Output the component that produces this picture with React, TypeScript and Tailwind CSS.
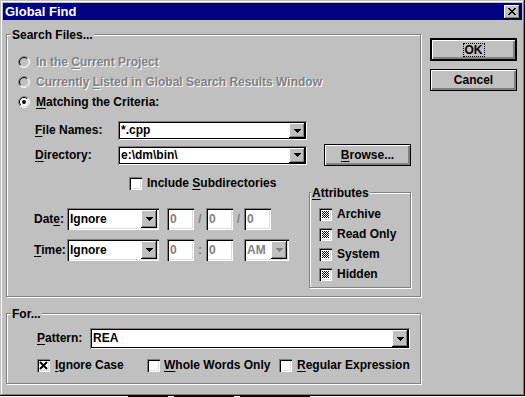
import React, { useId } from 'react';

// Win95 bevels
const sunken =
  'shadow-[inset_1px_1px_0_#808080,inset_2px_2px_0_#000,inset_-1px_-1px_0_#fff,inset_-2px_-2px_0_#dfdfdf]';
const raised = 'shadow-[inset_-1px_-1px_0_#000,inset_1px_1px_0_#fff,inset_-2px_-2px_0_#808080]';
const dimText = 'text-[#808080] [text-shadow:1px_1px_0_#fff]';

const U = ({ children }: { children: React.ReactNode }) => (
  <span className="underline decoration-1 underline-offset-[2px]">{children}</span>
);

const Arrow = ({ color = '#000' }: { color?: string }) => (
  <svg width="7" height="4" viewBox="0 0 7 4" shapeRendering="crispEdges">
    <path d="M0 0h7v1H0zM1 1h5v1H1zM2 2h3v1H2zM3 3h1v1H3z" fill={color} />
  </svg>
);

const DropBtn = ({ disabled }: { disabled?: boolean }) => (
  <div className={`flex w-[16px] shrink-0 items-center justify-center bg-[#c0c0c0] ${raised}`}>
    <Arrow color={disabled ? '#808080' : '#000'} />
  </div>
);

// edit combo with black frame (File Names, Directory, Pattern)
const EditCombo = ({ value, className }: { value: string; className: string }) => (
  <div className={`flex p-px shadow-[inset_1px_1px_0_#808080,inset_-1px_-1px_0_#fff] ${className}`}>
    <div className="flex flex-1 border border-black bg-white">
      <span className="flex flex-1 items-center pl-px">{value}</span>
      <DropBtn />
    </div>
  </div>
);

// drop-down list (Date, Time, AM)
const ListCombo = ({ value, className, disabled }: { value: string; className: string; disabled?: boolean }) => (
  <div className={`flex h-[22px] bg-white p-[2px] ${sunken} ${className}`}>
    <span className={`flex flex-1 items-center pl-px ${disabled ? 'text-[#808080]' : ''}`}>{value}</span>
    <DropBtn disabled={disabled} />
  </div>
);

const Field = () => (
  <div className={`h-[22px] w-[27px] bg-white pl-[3px] leading-[22px] text-[#808080] ${sunken}`}>0</div>
);

const Radio = ({ on, disabled }: { on?: boolean; disabled?: boolean }) => (
  <svg width="12" height="12" viewBox="0 0 12 12" className="shrink-0">
    <circle cx="6" cy="6" r="4.5" fill={disabled ? '#c0c0c0' : '#fff'} />
    <path d="M9.889 2.111A5.5 5.5 0 0 0 2.111 9.889" stroke="#808080" fill="none" />
    <path d="M2.111 9.889A5.5 5.5 0 0 0 9.889 2.111" stroke="#fff" fill="none" />
    <path d="M9.182 2.818A4.5 4.5 0 0 0 2.818 9.182" stroke="#000" fill="none" />
    <path d="M2.818 9.182A4.5 4.5 0 0 0 9.182 2.818" stroke="#dfdfdf" fill="none" />
    {on && <circle cx="6" cy="6" r="2" fill="#000" />}
  </svg>
);

const Check = ({ mark }: { mark?: 'x' | 'dither' }) => {
  const id = useId();
  return (
    <div className={`relative h-[13px] w-[13px] shrink-0 bg-white ${sunken}`}>
      {mark === 'x' && (
        <svg className="absolute inset-0" width="13" height="13" viewBox="0 0 13 13">
          <path d="M3 3l7 7M10 3l-7 7" stroke="#000" strokeWidth="2" />
        </svg>
      )}
      {mark === 'dither' && (
        <svg className="absolute inset-0" width="13" height="13" viewBox="0 0 13 13" shapeRendering="crispEdges">
          <defs>
            <pattern id={id} width="2" height="2" patternUnits="userSpaceOnUse">
              <rect x="0" y="0" width="1" height="1" fill="#000" />
              <rect x="1" y="1" width="1" height="1" fill="#000" />
            </pattern>
          </defs>
          <rect x="3" y="3" width="7" height="7" fill={`url(#${id})`} />
        </svg>
      )}
    </div>
  );
};

const GroupBox = ({
  label,
  className,
  labelPos = 'left-[4px]',
  children,
}: {
  label: React.ReactNode;
  className: string;
  labelPos?: string;
  children: React.ReactNode;
}) => (
  <div className={`relative border border-[#808080] shadow-[inset_1px_1px_0_#fff,1px_1px_0_#fff] ${className}`}>
    <span className={`absolute -top-[7px] bg-[#c0c0c0] px-px ${labelPos}`}>{label}</span>
    {children}
  </div>
);

const Button = ({ children, isDefault }: { children: React.ReactNode; isDefault?: boolean }) => (
  <div
    className={`flex w-[87px] items-center justify-center border-black bg-[#c0c0c0] shadow-[inset_1px_1px_0_#fff,inset_-1px_-1px_0_#808080,inset_-2px_-2px_0_#808080] ${
      isDefault ? 'h-[23px] border-2' : 'h-[22px] border'
    }`}
  >
    {children}
  </div>
);

const CloseBox = () => (
  <div className={`flex h-[14px] w-[16px] items-center justify-center bg-[#c0c0c0] ${raised}`}>
    <svg width="8" height="7" viewBox="0 0 8 7" shapeRendering="crispEdges">
      <path
        d="M0 0h2v1H0zM6 0h2v1H6zM1 1h2v1H1zM5 1h2v1H5zM2 2h4v1H2zM3 3h2v1H3zM2 4h4v1H2zM1 5h2v1H1zM5 5h2v1H5zM0 6h2v1H0zM6 6h2v1H6z"
        fill="#000"
      />
    </svg>
  </div>
);

export default function App() {
  return (
    <div className="h-[397px] w-[525px] overflow-hidden bg-white font-['Liberation_Sans',Arial,sans-serif] text-[12px] font-bold leading-[15px] text-black">
      <div className="flex h-[396px] w-[525px] flex-col bg-[#c0c0c0] p-[3px] shadow-[inset_-1px_-1px_0_#000,inset_1px_1px_0_#c0c0c0,inset_-2px_-2px_0_#808080,inset_2px_2px_0_#fff]">
        {/* Title bar */}
        <div className="flex h-[17px] shrink-0 items-center justify-between bg-[#000080] pl-[2px] pr-[2px]">
          <span className="text-[13px] text-white">Global Find</span>
          <CloseBox />
        </div>

        <div className="flex flex-1">
          {/* Left column */}
          <div className="ml-[3px] flex flex-col">
            <GroupBox label="Search Files..." className="mt-[14px] h-[263px] w-[415px]">
              <div className="flex flex-col">
                <div className="flex flex-col pl-[11px] pt-[17px]">
                  <div className="flex h-[20px] items-center gap-[6px]">
                    <Radio disabled />
                    <span className={dimText}>
                      In the <U>C</U>urrent Project
                    </span>
                  </div>
                  <div className="flex h-[20px] items-center gap-[6px]">
                    <Radio disabled />
                    <span className={dimText}>
                      Currently <U>L</U>isted in Global Search Results Window
                    </span>
                  </div>
                  <div className="flex h-[20px] items-center gap-[6px]">
                    <Radio on />
                    <span>
                      <U>M</U>atching the Criteria:
                    </span>
                  </div>
                </div>

                <div className="mt-[9px] flex h-[19px] items-center pl-[28px]">
                  <span className="w-[83px]">
                    <U>F</U>ile Names:
                  </span>
                  <EditCombo value="*.cpp" className="h-[19px] w-[189px]" />
                </div>

                <div className="mt-[4px] flex h-[22px] items-center pl-[28px]">
                  <span className="w-[83px]">
                    <U>D</U>irectory:
                  </span>
                  <EditCombo value="e:\dm\bin\" className="h-[19px] w-[189px]" />
                  <div className="ml-[17px] w-[88px]">
                    <Button>
                      <span>
                        <U>B</U>rowse...
                      </span>
                    </Button>
                  </div>
                </div>

                <div className="mt-[10px] flex">
                  <div className="flex w-[302px] flex-col">
                    <div className="flex h-[15px] items-center gap-[5px] pl-[122px]">
                      <Check />
                      <span>
                        Include <U>S</U>ubdirectories
                      </span>
                    </div>

                    <div className="mt-[17px] flex h-[22px] items-center pl-[27px]">
                      <span className="w-[33px]">
                        Dat<U>e</U>:
                      </span>
                      <ListCombo value="Ignore" className="w-[92px]" />
                      <div className="ml-[8px] flex items-center">
                        <Field />
                        <span className="w-[12px] text-center text-[#808080]">/</span>
                        <Field />
                        <span className="w-[11px] text-center text-[#808080]">/</span>
                        <Field />
                      </div>
                    </div>

                    <div className="mt-[9px] flex h-[22px] items-center pl-[27px]">
                      <span className="w-[33px]">
                        <U>T</U>ime:
                      </span>
                      <ListCombo value="Ignore" className="w-[92px]" />
                      <div className="ml-[8px] flex items-center">
                        <Field />
                        <span className="w-[12px] text-center text-[#808080]">:</span>
                        <Field />
                        <div className="ml-[11px]">
                          <ListCombo value="AM" className="w-[45px]" disabled />
                        </div>
                      </div>
                    </div>
                  </div>

                  <GroupBox
                    label={
                      <>
                        <U>A</U>ttributes
                      </>
                    }
                    labelPos="left-[1px]"
                    className="mt-[16px] h-[96px] w-[102px]"
                  >
                    <div className="flex flex-col pl-[9px] pt-[11px]">
                      {['Archive', 'Read Only', 'System', 'Hidden'].map((a) => (
                        <div key={a} className="flex h-[20px] items-center gap-[5px]">
                          <Check mark="dither" />
                          <span>{a}</span>
                        </div>
                      ))}
                    </div>
                  </GroupBox>
                </div>
              </div>
            </GroupBox>

            <GroupBox label="For..." className="mt-[16px] h-[71px] w-[415px]">
              <div className="flex flex-col pt-[14px]">
                <div className="flex h-[21px] items-center pl-[30px]">
                  <span className="w-[53px]">
                    <U>P</U>attern:
                  </span>
                  <EditCombo value="REA" className="h-[21px] w-[320px]" />
                </div>
                <div className="mt-[9px] flex h-[15px] items-center pl-[30px]">
                  <div className="flex w-[110px] items-center gap-[5px]">
                    <Check mark="x" />
                    <span>
                      <U>I</U>gnore Case
                    </span>
                  </div>
                  <div className="flex w-[132px] items-center gap-[4px]">
                    <Check />
                    <span>
                      <U>W</U>hole Words Only
                    </span>
                  </div>
                  <div className="flex items-center gap-[5px]">
                    <Check />
                    <span>
                      <U>R</U>egular Expression
                    </span>
                  </div>
                </div>
              </div>
            </GroupBox>
          </div>

          {/* Buttons */}
          <div className="ml-[9px] mt-[18px] flex flex-col gap-[8px]">
            <Button isDefault>
              <span className="border border-dotted border-black px-px leading-[12px]">OK</span>
            </Button>
            <Button>Cancel</Button>
          </div>
        </div>
      </div>

      {/* edge of the window underneath */}
      <div className="flex h-px">
        <div className="ml-[128px] h-px w-[40px] bg-black" />
        <div className="ml-[6px] h-px w-[60px] bg-black" />
        <div className="ml-[6px] h-px w-[70px] bg-black" />
      </div>
    </div>
  );
}
